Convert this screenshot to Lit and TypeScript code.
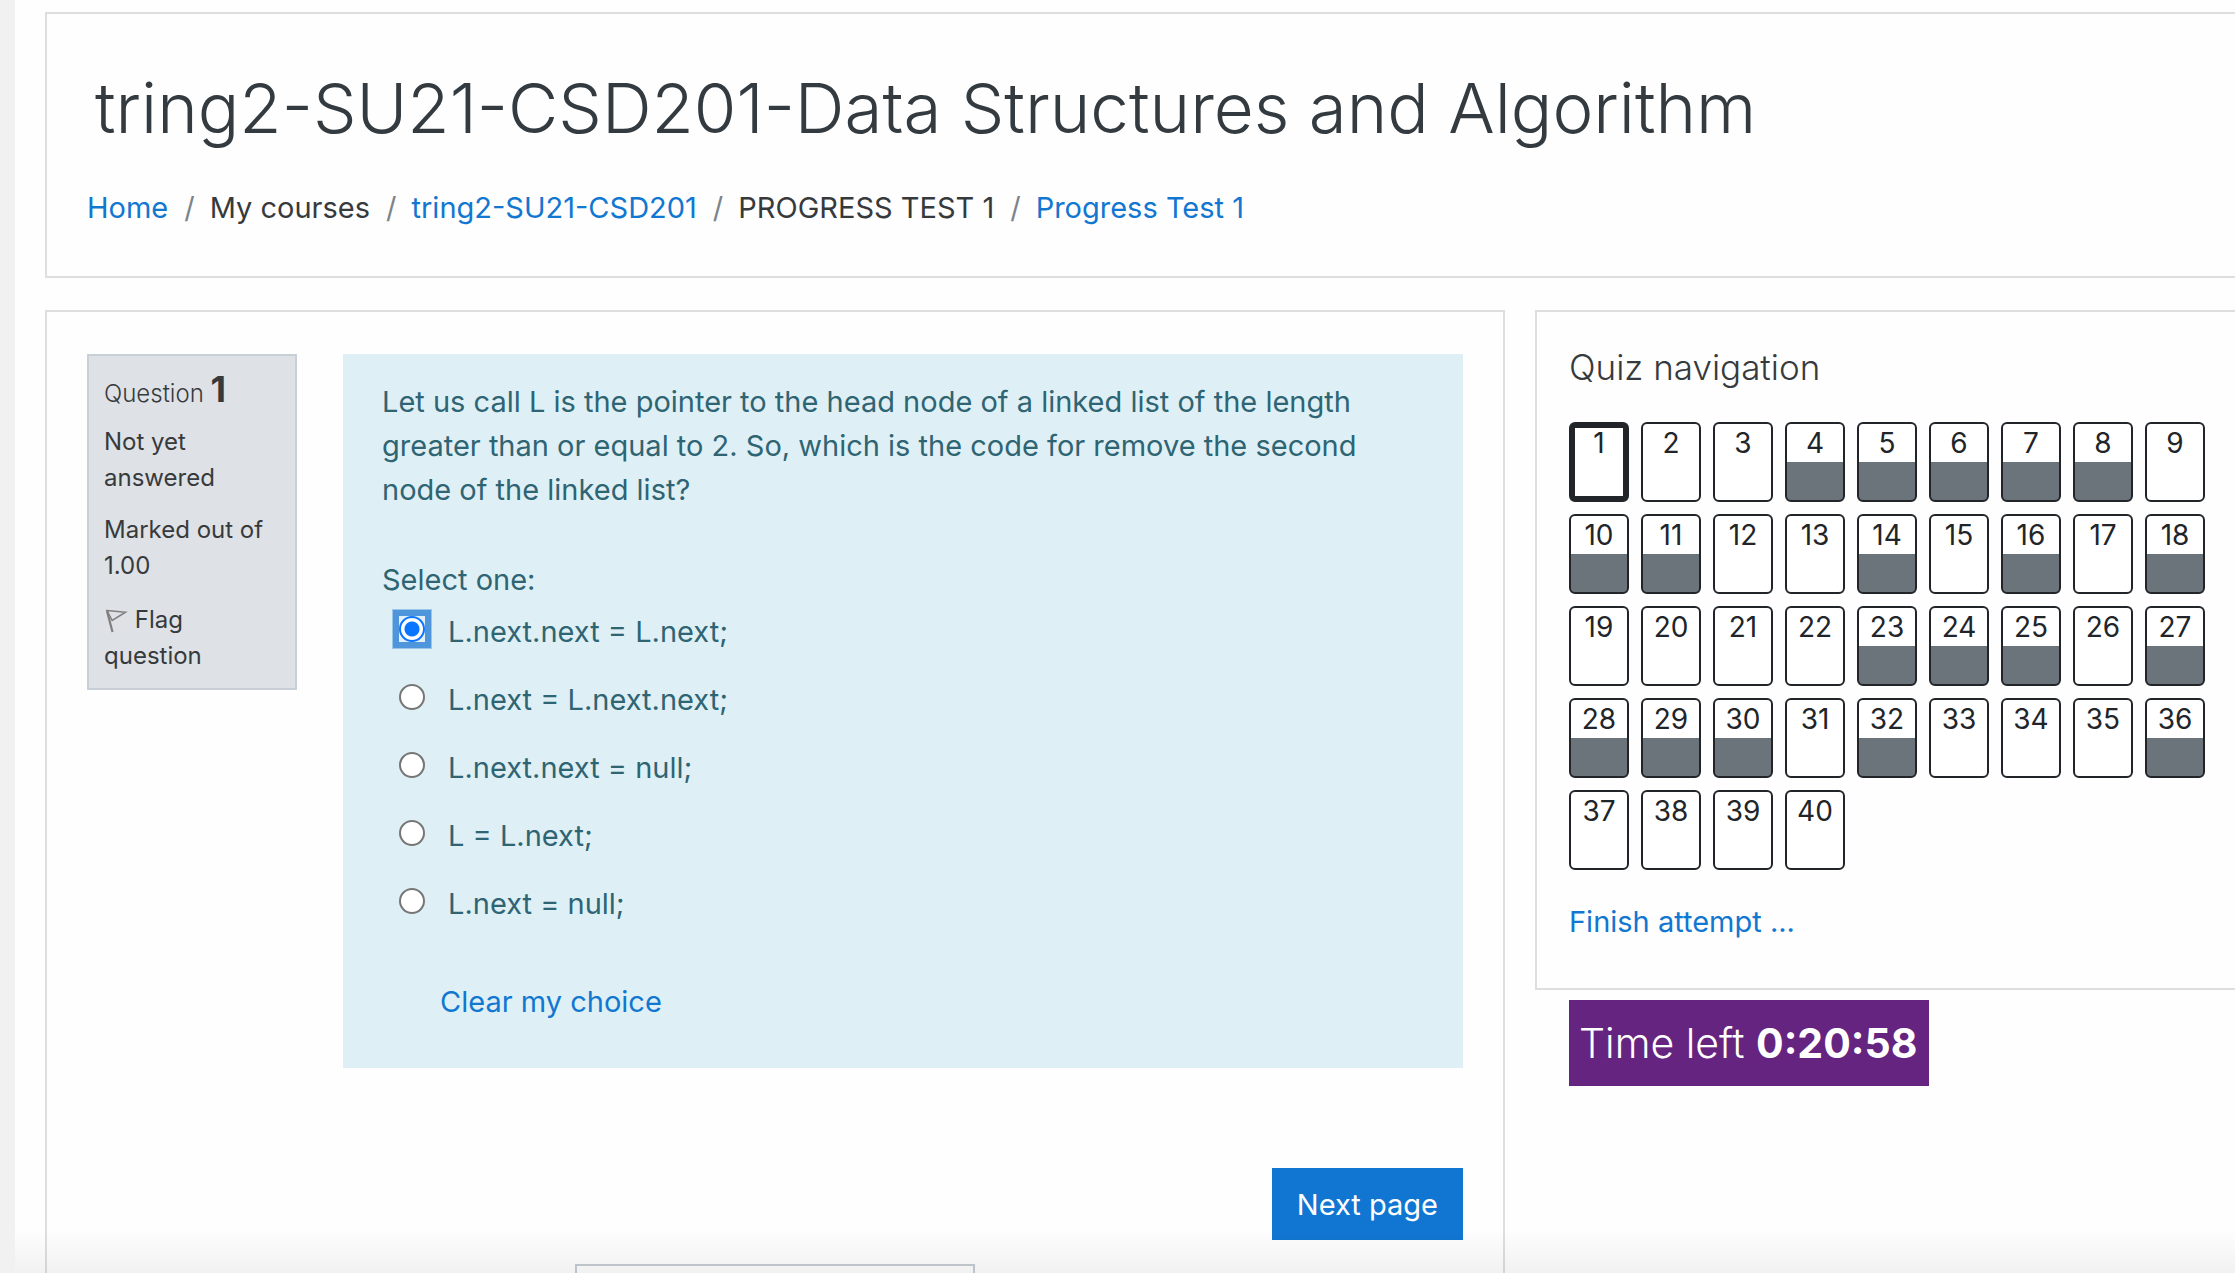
import { LitElement, html, css, nothing } from "lit";
import { customElement, state } from "lit/decorators.js";
import { classMap } from "lit/directives/class-map.js";

interface Crumb {
  label: string;
  link: boolean;
}

const CRUMBS: Crumb[] = [
  { label: "Home", link: true },
  { label: "My courses", link: false },
  { label: "tring2-SU21-CSD201", link: true },
  { label: "PROGRESS TEST 1", link: false },
  { label: "Progress Test 1", link: true },
];

const OPTIONS = [
  "L.next.next = L.next;",
  "L.next = L.next.next;",
  "L.next.next = null;",
  "L = L.next;",
  "L.next = null;",
];

const QUESTION_COUNT = 40;
const SAVED = new Set([4, 5, 6, 7, 8, 10, 11, 14, 16, 18, 23, 24, 25, 27, 28, 29, 30, 32, 36]);

@customElement("quiz-question")
export class QuizQuestion extends LitElement {
  @state() private selected = 0;

  static styles = css`
    :host {
      display: flex;
      align-items: flex-start;
      gap: 46px;
    }
    .info {
      box-sizing: border-box;
      flex: 0 0 210px;
      padding: 11px 15px 14px;
      border: 2px solid #c8cfd6;
      background: #dee1e6;
      color: #373a3c;
      font-size: 24px;
      line-height: 36px;
    }
    .info h3 {
      margin: 0 0 8px;
      font-size: 24px;
      font-weight: 300;
      line-height: 44px;
    }
    .number {
      font-size: 36px;
      font-weight: 700;
    }
    .info p {
      margin: 0 0 16px;
    }
    .info .flag {
      margin: 18px 0 0;
    }
    .flag a {
      color: inherit;
      text-decoration: none;
    }
    .flag svg {
      width: 24px;
      height: 24px;
      vertical-align: -5px;
    }
    .formulation {
      flex: 1;
      min-width: 0;
      padding: 26px 39px 44px;
      background: #def0f6;
      color: #2f6473;
      line-height: 44px;
    }
    .text {
      max-width: 1000px;
      margin: 0 0 46px;
    }
    fieldset {
      margin: 0;
      padding: 0;
      border: 0;
    }
    legend {
      padding: 0;
    }
    .option {
      display: flex;
      align-items: center;
      gap: 23px;
      height: 44px;
      margin: 8px 0 24px 17px;
    }
    .ring {
      display: flex;
      width: 26px;
      height: 26px;
      margin-bottom: 6px;
    }
    .ring.on {
      background: #e1effb;
      box-shadow: 0 0 0 6px #4f95db, 0 0 0 7px #9cc5ea;
    }
    input {
      appearance: none;
      box-sizing: border-box;
      width: 26px;
      height: 26px;
      margin: 0;
      border: 2px solid #767676;
      border-radius: 50%;
      background: #fff;
      outline: none;
    }
    input:checked {
      border-color: #0a75ff;
      background: radial-gradient(circle, #0a75ff 0 7px, #fff 8px);
    }
    .clear {
      display: inline-block;
      margin: 30px 0 0 58px;
      color: #1177d1;
      text-decoration: none;
    }
  `;

  private clear(e: Event) {
    e.preventDefault();
    this.selected = -1;
  }

  render() {
    return html`
      <section class="info">
        <h3>Question <span class="number">1</span></h3>
        <p>Not yet answered</p>
        <p>Marked out of 1.00</p>
        <p class="flag">
          <a href="#flag"
            ><svg viewBox="0 0 24 24" fill="none" stroke="#807f7e" aria-hidden="true">
              <path d="M3 2 L8.500 23" stroke-width="2.200" />
              <path d="M3 1.500 L21.500 3.200 L8.200 11.500 Z" stroke-width="1.500" />
            </svg>
            Flag question</a
          >
        </p>
      </section>
      <section class="formulation">
        <p class="text">
          Let us call L is the pointer to the head node of a linked list of the length greater than
          or equal to 2. So, which is the code for remove the second node of the linked list?
        </p>
        <fieldset>
          <legend>Select one:</legend>
          ${OPTIONS.map(
            (label, i) => html`
              <div class="option">
                <span class=${classMap({ ring: true, on: this.selected === i })}>
                  <input
                    type="radio"
                    name="answer"
                    id="answer${i}"
                    .checked=${this.selected === i}
                    @change=${() => (this.selected = i)}
                  />
                </span>
                <label for="answer${i}">${label}</label>
              </div>
            `
          )}
        </fieldset>
        ${this.selected >= 0
          ? html`<a class="clear" href="#clear" @click=${this.clear}>Clear my choice</a>`
          : nothing}
      </section>
    `;
  }
}

@customElement("quiz-navigation")
export class QuizNavigation extends LitElement {
  static styles = css`
    :host {
      display: block;
    }
    .card {
      padding: 32px 12px 44px 32px;
      border: 2px solid #dedede;
      border-right: 0;
    }
    h2 {
      margin: 0 0 32px;
      color: #373a3c;
      font-size: 35px;
      font-weight: 300;
      line-height: 46px;
    }
    .buttons {
      display: flex;
      flex-wrap: wrap;
      gap: 12px;
      margin-bottom: 30px;
    }
    .button {
      display: flex;
      flex-direction: column;
      box-sizing: border-box;
      width: 60px;
      height: 80px;
      border: 2px solid #212529;
      border-radius: 6px;
      overflow: hidden;
      background: #fff;
      color: #212529;
      font-size: 28px;
      line-height: 38px;
      text-align: center;
      text-decoration: none;
    }
    .saved {
      background: linear-gradient(#fff 38px, #6c747b 38px);
    }
    .current {
      border-width: 6px;
      line-height: 30px;
    }
    .finish {
      color: #1177d1;
      line-height: 44px;
      text-decoration: none;
    }
    .timer {
      display: inline-block;
      margin: 10px 0 0 34px;
      padding: 16px 12px 16px 10px;
      background: #65247f;
      color: #fff;
      font-size: 41px;
      font-weight: 300;
      line-height: 54px;
      white-space: nowrap;
    }
    .timer strong {
      font-weight: 700;
    }
  `;

  render() {
    const numbers = Array.from({ length: QUESTION_COUNT }, (_, i) => i + 1);
    return html`
      <section class="card">
        <h2>Quiz navigation</h2>
        <nav class="buttons">
          ${numbers.map(
            (n) => html`<a
              class=${classMap({ button: true, saved: SAVED.has(n), current: n === 1 })}
              href="#question-${n}"
              >${n}</a
            >`
          )}
        </nav>
        <a class="finish" href="#finish">Finish attempt ...</a>
      </section>
      <div class="timer" role="timer">Time left <strong>0:20:58</strong></div>
    `;
  }
}

@customElement("app-root")
export class AppRoot extends LitElement {
  static styles = css`
    :host {
      display: block;
      position: relative;
      box-sizing: border-box;
      height: 100vh;
      overflow: hidden;
      padding: 12px 0 0 30px;
      border-left: 15px solid #f1f1f1;
      background: #fefefe;
      color: #373a3c;
      font-family: Inter, "Liberation Sans", sans-serif;
      font-size: 29px;
    }
    header {
      padding: 44px 40px 46px;
      border: 2px solid #dedede;
      border-right: 0;
    }
    h1 {
      margin: 0 0 28px 8px;
      color: #343b40;
      font-size: 69px;
      font-weight: 300;
      line-height: 100px;
      white-space: nowrap;
    }
    .crumbs {
      display: flex;
      flex-wrap: wrap;
      margin: 0;
      padding: 0;
      list-style: none;
      line-height: 44px;
    }
    .crumbs li + li::before {
      content: "/";
      padding: 0 15px 0 16px;
      color: #7c848b;
    }
    .crumbs a {
      color: #1177d1;
      text-decoration: none;
    }
    .columns {
      display: grid;
      grid-template-columns: 1460fr 700fr;
      gap: 30px;
      margin-top: 32px;
    }
    main {
      padding: 42px 40px;
      border: 2px solid #dedede;
    }
    .submit {
      display: flex;
      justify-content: flex-end;
      margin-top: 100px;
    }
    .next {
      padding: 15px 25px 13px;
      border: 0;
      background: #1176d2;
      color: #fff;
      font: inherit;
      line-height: 44px;
    }
    .jump {
      display: block;
      width: 400px;
      height: 72px;
      margin: 24px auto 0;
      padding: 0 20px;
      border: 2px solid #c5ccd3;
      background: transparent;
      color: #495057;
      font: inherit;
      appearance: none;
    }
    .shade {
      position: absolute;
      right: 0;
      bottom: 0;
      left: 0;
      height: 44px;
      background: linear-gradient(rgba(0, 0, 0, 0), rgba(0, 0, 0, 0.05));
      pointer-events: none;
    }
  `;

  render() {
    return html`
      <header>
        <h1>tring2-SU21-CSD201-Data Structures and Algorithm</h1>
        <nav>
          <ol class="crumbs">
            ${CRUMBS.map(
              (c) => html`<li>${c.link ? html`<a href="#">${c.label}</a>` : c.label}</li>`
            )}
          </ol>
        </nav>
      </header>
      <div class="columns">
        <main>
          <quiz-question></quiz-question>
          <div class="submit"><button class="next" type="button">Next page</button></div>
          <select class="jump" aria-label="Activity"></select>
        </main>
        <quiz-navigation></quiz-navigation>
      </div>
      <div class="shade"></div>
    `;
  }
}
